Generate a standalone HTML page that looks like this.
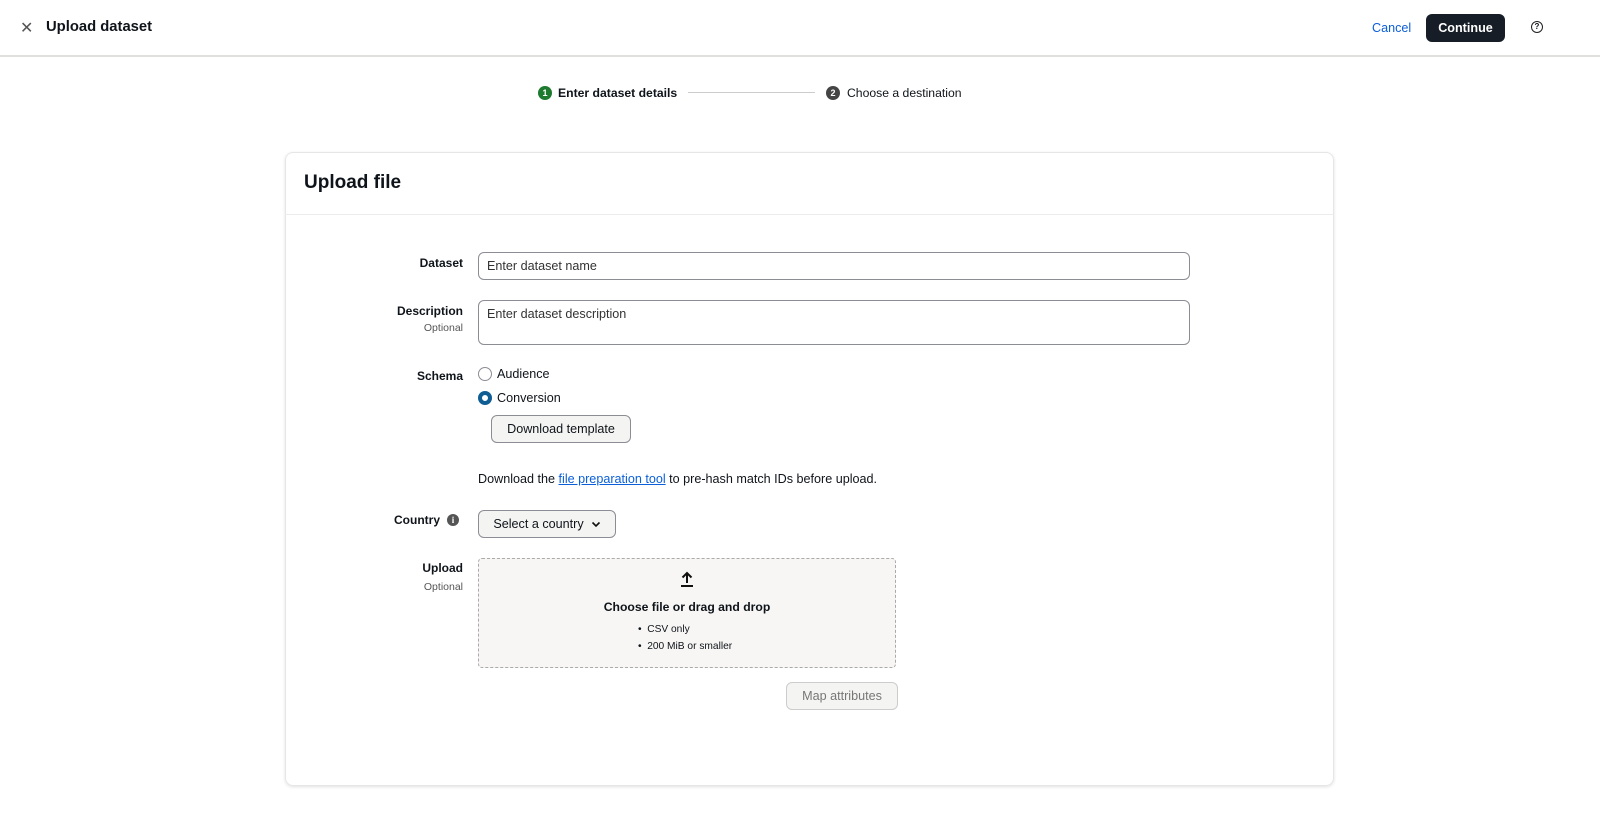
<!DOCTYPE html>
<html><head><meta charset="utf-8"><style>
*{box-sizing:border-box;margin:0;padding:0}
body{width:1600px;height:823px;background:#fff;font-family:"Liberation Sans",sans-serif;color:#0f141a;font-size:12.6px;position:relative;overflow:hidden}
.abs{position:absolute}
.top{position:absolute;left:0;top:0;width:1600px;height:57px;border-bottom:2px solid #e0e0dc;background:#fff}
.btn{position:absolute;border:1px solid #8c8c94;border-radius:6px;background:#f4f4f2;font-size:12.6px;display:flex;align-items:center;justify-content:center}
.lbl{position:absolute;right:1137px;font-weight:bold;font-size:12px;text-align:right}
.opt{position:absolute;right:1137px;font-size:10.5px;color:#555;text-align:right}
.inp{position:absolute;left:478px;width:712px;border:1px solid #8c8c94;border-radius:6px;padding:0 8px;font-size:12.6px;color:#333}
</style></head><body>
<div class="top">
<div class="abs" style="left:20px;top:18px;font-size:16px;color:#555">✕</div>
<div class="abs" style="left:46px;top:19px;font-size:14.8px;font-weight:bold">Upload dataset</div>
<div class="abs" style="left:1372px;top:21px;color:#0b5fd8;font-size:12.6px">Cancel</div>
<div class="abs" style="left:1426px;top:14px;width:79px;height:28px;background:#161d26;border-radius:6px;color:#fff;font-weight:bold;font-size:12.6px;display:flex;align-items:center;justify-content:center">Continue</div>
<div class="abs" style="left:1531px;top:21px;width:12px;height:12px;border:1.5px solid #222;border-radius:50%;font-size:8px;font-weight:bold;text-align:center;line-height:10px">?</div>
</div>
<div class="abs" style="left:538px;top:86px;width:14px;height:14px;border-radius:50%;background:#1e7a2f;color:#fff;font-size:9px;font-weight:bold;text-align:center;line-height:14px">1</div>
<div class="abs" style="left:558px;top:86px;font-weight:bold;font-size:12.2px">Enter dataset details</div>
<div class="abs" style="left:688px;top:92px;width:127px;height:1px;background:#ccc"></div>
<div class="abs" style="left:826px;top:86px;width:14px;height:14px;border-radius:50%;background:#444;color:#fff;font-size:9px;font-weight:bold;text-align:center;line-height:14px">2</div>
<div class="abs" style="left:847px;top:86px;font-size:12.2px">Choose a destination</div>

<div class="abs" style="left:285px;top:152px;width:1049px;height:634px;border:1px solid #e6e6e6;border-radius:8px;box-shadow:0 1px 3px rgba(0,0,0,.12)"></div>
<div class="abs" style="left:285px;top:214px;width:1049px;height:1px;background:#ececec"></div>
<div class="abs" style="left:304px;top:172px;font-size:19px;font-weight:bold">Upload file</div>

<div class="lbl" style="top:256px">Dataset</div>
<div class="inp" style="top:252px;height:28px;line-height:26px">Enter dataset name</div>
<div class="lbl" style="top:304px">Description</div>
<div class="opt" style="top:322px">Optional</div>
<div class="inp" style="top:300px;height:45px;padding-top:6px">Enter dataset description</div>
<div class="lbl" style="top:369px">Schema</div>
<div class="abs" style="left:478px;top:367px;width:14px;height:14px;border:1.5px solid #8c8c94;border-radius:50%"></div>
<div class="abs" style="left:497px;top:367px">Audience</div>
<div class="abs" style="left:478px;top:391px;width:14px;height:14px;border:4px solid #0f5d93;border-radius:50%"></div>
<div class="abs" style="left:497px;top:391px">Conversion</div>
<div class="btn" style="left:491px;top:415px;width:140px;height:28px">Download template</div>
<div class="abs" style="left:478px;top:472px">Download the <span style="color:#0b5fd8;text-decoration:underline">file preparation tool</span> to pre-hash match IDs before upload.</div>
<div class="lbl" style="top:513px;right:1160px">Country</div>
<div class="abs" style="left:447px;top:514px;width:12px;height:12px;border-radius:50%;background:#555;color:#fff;font-size:9px;font-weight:bold;text-align:center;line-height:12px;font-family:'Liberation Serif',serif">i</div>
<div class="btn" style="left:478px;top:510px;width:138px;height:28px">Select a country&nbsp;&nbsp;<svg width="10" height="7" viewBox="0 0 10 7"><path d="M1.5 1.5L5 5l3.5-3.5" stroke="#111" stroke-width="1.6" fill="none"/></svg></div>
<div class="lbl" style="top:561px">Upload</div>
<div class="opt" style="top:581px">Optional</div>
<div class="abs" style="left:478px;top:558px;width:418px;height:110px;border:1px dashed #aaa;border-radius:4px;background:#f7f6f4"></div>
<svg class="abs" style="left:679px;top:570px" width="16" height="18" viewBox="0 0 16 18"><path d="M8 13V3M3.5 7.5L8 3l4.5 4.5" stroke="#111" stroke-width="2" fill="none"/><path d="M2 16h12" stroke="#111" stroke-width="2"/></svg>
<div class="abs" style="left:478px;top:600px;width:418px;text-align:center;font-weight:bold;font-size:12.2px">Choose file or drag and drop</div>
<div class="abs" style="left:638px;top:621px;font-size:10.2px;line-height:17px">•&nbsp; CSV only<br>•&nbsp; 200 MiB or smaller</div>
<div class="btn" style="left:786px;top:682px;width:112px;height:28px;color:#777;border-color:#ccc">Map attributes</div>
</body></html>
